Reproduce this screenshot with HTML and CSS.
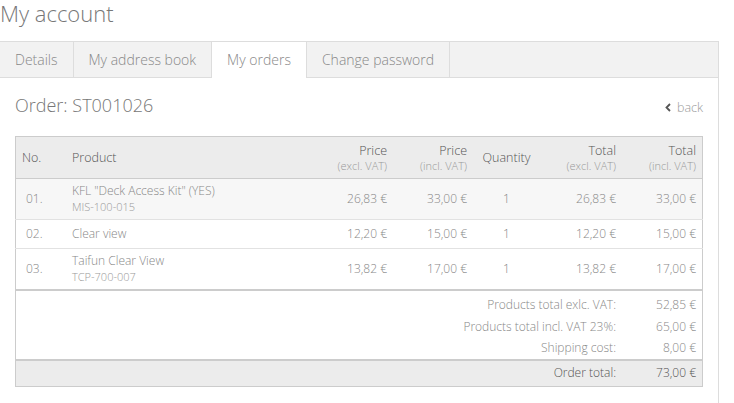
FILE: index.html
```html
<!DOCTYPE html>
<html>
<head>
<meta charset="utf-8">
<link rel="stylesheet" href="styles.css">
</head>
<body>
<h1 class="page-title">My account</h1>
<div class="account">
  <nav class="tabs">
    <a class="tab">Details</a>
    <a class="tab">My address book</a>
    <a class="tab active">My orders</a>
    <a class="tab">Change password</a>
  </nav>
  <div class="panel">
    <div class="order-head">
      <h2 class="order-title">Order: ST001026</h2>
      <a class="back"><svg width="6" height="9" viewBox="0 0 6 9"><polyline points="5,1 1.5,4.5 5,8" fill="none" stroke="#555" stroke-width="1.8"/></svg>back</a>
    </div>
    <table class="order">
      <thead>
        <tr>
          <th class="c-no">No.</th>
          <th class="c-prod">Product</th>
          <th class="num c-pe">Price<span>(excl. VAT)</span></th>
          <th class="num c-pi">Price<span>(incl. VAT)</span></th>
          <th class="c-qty">Quantity</th>
          <th class="num c-te">Total<span>(excl. VAT)</span></th>
          <th class="num c-ti">Total<span>(incl. VAT)</span></th>
        </tr>
      </thead>
      <tbody>
        <tr class="tall shade">
          <td class="no">01.</td>
          <td>KFL "Deck Access Kit" (YES)<span class="sku">MIS-100-015</span></td>
          <td class="num">26,83 €</td>
          <td class="num">33,00 €</td>
          <td class="qty">1</td>
          <td class="num">26,83 €</td>
          <td class="num">33,00 €</td>
        </tr>
        <tr class="short">
          <td class="no">02.</td>
          <td>Clear view</td>
          <td class="num">12,20 €</td>
          <td class="num">15,00 €</td>
          <td class="qty">1</td>
          <td class="num">12,20 €</td>
          <td class="num">15,00 €</td>
        </tr>
        <tr class="tall last">
          <td class="no">03.</td>
          <td>Taifun Clear View<span class="sku">TCP-700-007</span></td>
          <td class="num">13,82 €</td>
          <td class="num">17,00 €</td>
          <td class="qty">1</td>
          <td class="num">13,82 €</td>
          <td class="num">17,00 €</td>
        </tr>
      </tbody>
      <tfoot>
        <tr class="sum first">
          <td colspan="6" class="num">Products total exlc. VAT:</td>
          <td class="num">52,85 €</td>
        </tr>
        <tr class="sum">
          <td colspan="6" class="num">Products total incl. VAT 23%:</td>
          <td class="num">65,00 €</td>
        </tr>
        <tr class="sum lastsum">
          <td colspan="6" class="num">Shipping cost:</td>
          <td class="num">8,00 €</td>
        </tr>
        <tr class="grand">
          <td colspan="6" class="num">Order total:</td>
          <td class="num">73,00 €</td>
        </tr>
      </tfoot>
    </table>
  </div>
</div>
</body>
</html>
```
FILE: styles.css
```css
html, body {
  margin: 0;
  padding: 0;
  background: #fff;
}
body {
  font-family: "Open Sans", "Liberation Sans", sans-serif;
  font-weight: 300;
  color: #888;
  height: 403px;
  overflow: hidden;
}
.page-title {
  margin: 0 0 15px 0;
  font-size: 22px;
  line-height: 26px;
  font-weight: 300;
  color: #777;
}
.account {
  width: 719px;
  box-sizing: border-box;
  border-right: 1px solid #ddd;
  height: 362px;
}
.tabs {
  display: flex;
  background: #f2f2f2;
  border-top: 1px solid #ddd;
  border-bottom: 1px solid #ddd;
  height: 35px;
}
.tab {
  display: block;
  padding: 0 15px;
  line-height: 35px;
  font-size: 14px;
  color: #888;
  border-right: 1px solid #ddd;
}
.tab.active {
  background: #fff;
  height: 36px;
  color: #888;
}
.panel {
  padding: 0 15px;
}
.order-head {
  display: flex;
  justify-content: space-between;
  align-items: center;
  margin-top: 15px;
  height: 24px;
}
.order-title {
  margin: 0;
  font-size: 18px;
  font-weight: 300;
  color: #777;
  line-height: 24px;
}
.back {
  font-size: 12.5px;
  color: #999;
  display: flex;
  align-items: center;
  gap: 6px;
  margin-top: 4px;
}
.order {
  margin-top: 19px;
  width: 688px;
  border-collapse: collapse;
  border: 1px solid #ccc;
  font-size: 12px;
}
.order th {
  background: #ececec;
  font-weight: 300;
  color: #555;
  font-size: 12.5px;
  text-align: left;
  height: 41px;
  padding: 0 6px;
  line-height: 15px;
  border-bottom: 1px solid #ccc;
}
.order th span {
  display: block;
  font-size: 11px;
  color: #999;
}
.order th.num, .order td.num { text-align: right; }
.order th.c-qty { text-align: center; }
.c-no { width: 38px; }
.c-prod { width: auto; }
.c-pe { width: 60px; }
.c-pi { width: 68px; }
.c-qty { width: 55px; }
.c-te { width: 70px; }
.c-ti { width: 68px; }
.order td {
  padding: 0 6px;
  color: #888;
  line-height: 16px;
}
.order td.no { padding-left: 10px; }
.order td.qty { text-align: center; }
.sku {
  display: block;
  font-size: 11px;
  color: #999;
}
tbody tr { border-bottom: 1px solid #e2e2e2; }
tbody tr.tall { height: 41px; }
tbody tr.short { height: 29px; }
tbody tr.shade { background: #f7f7f7; }
tbody tr.last { border-bottom: 2px solid #ccc; }
tfoot tr.sum { height: 22px; }
tfoot tr.sum.first { height: 26px; }
tfoot tr.sum.first td { padding-top: 4px; }
tfoot tr.sum.lastsum { border-bottom: 2px solid #ccc; }
tfoot tr.grand {
  height: 27px;
  background: #ececec;
}
tfoot tr.grand td { color: #555; }
```
